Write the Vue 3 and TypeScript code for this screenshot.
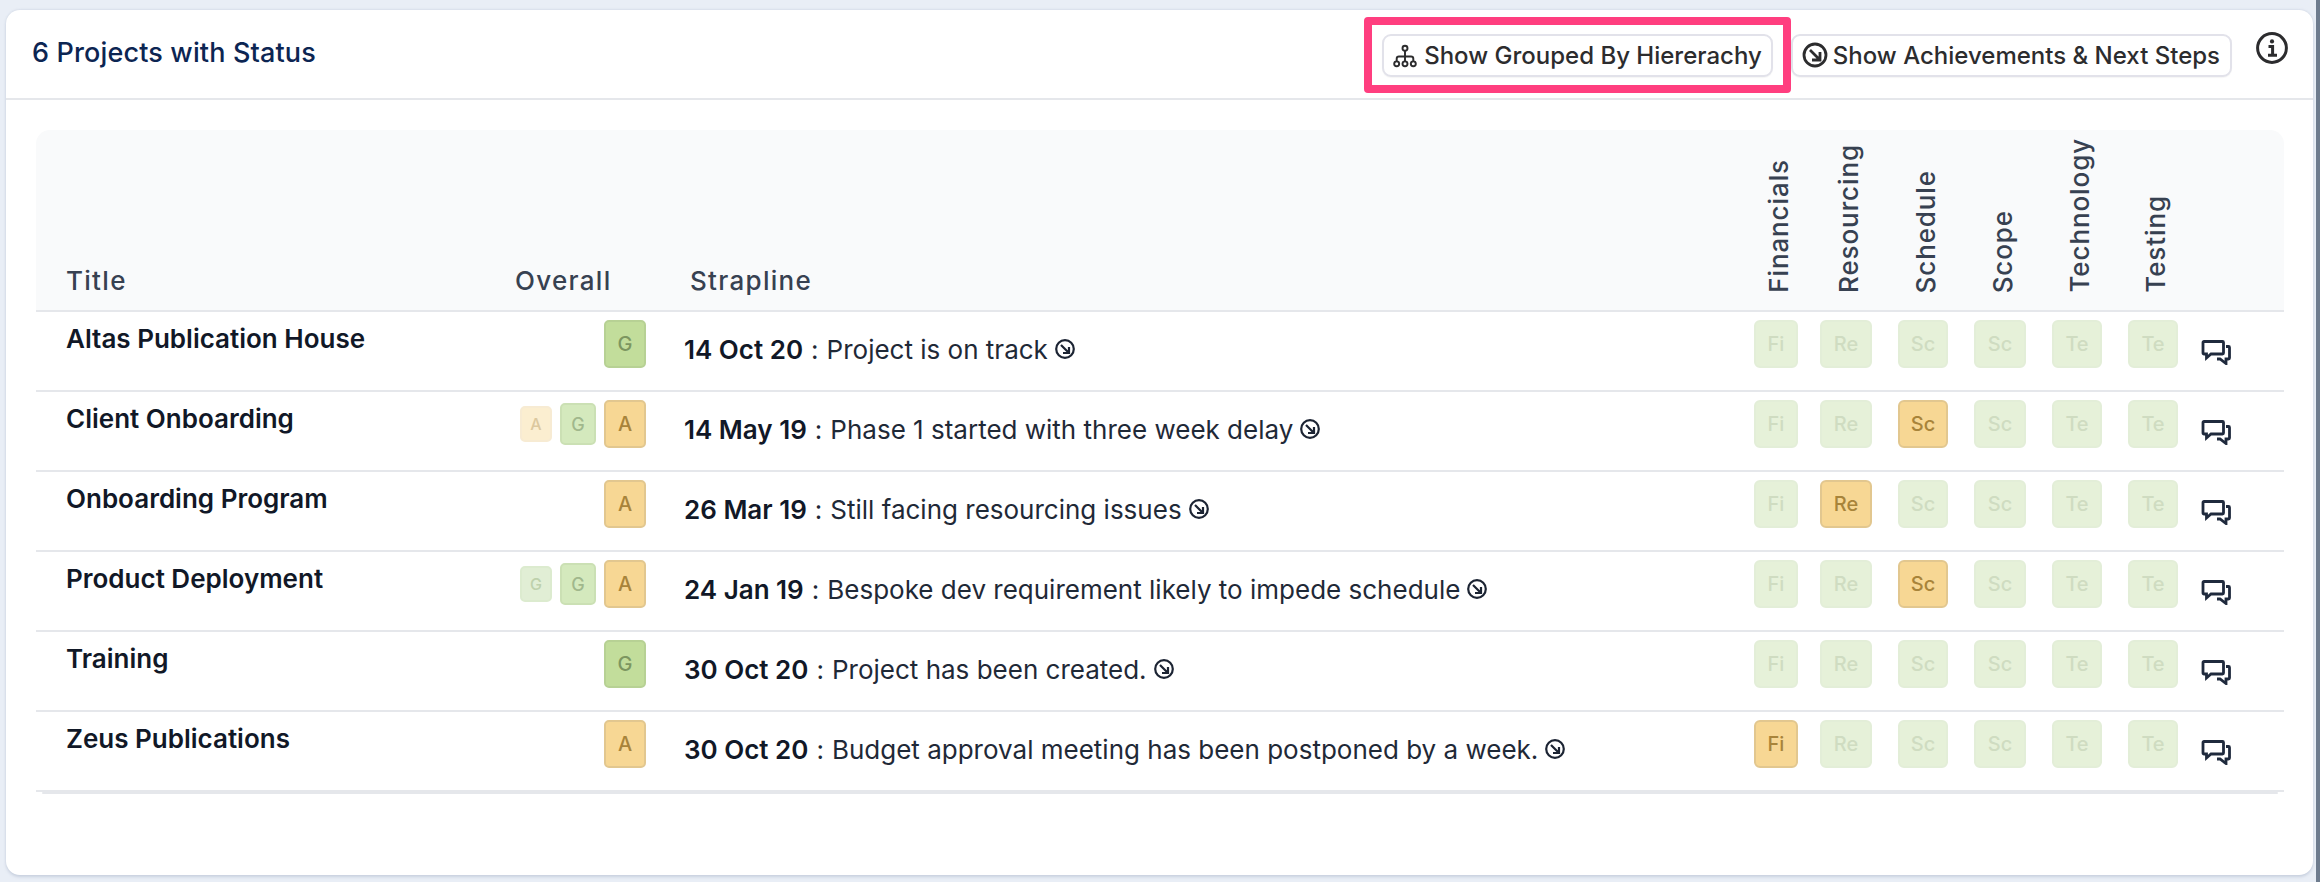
<script setup lang="ts">
type Tone = 'g' | 'a' | 'p'
interface Hist { label: string; tone: 'a' | 'g' }
interface Project {
  title: string
  history: Hist[]
  overall: 'G' | 'A'
  date: string
  text: string
  amber: number
}

const columns = [
  { name: 'Financials', short: 'Fi', width: 44 },
  { name: 'Resourcing', short: 'Re', width: 52 },
  { name: 'Schedule', short: 'Sc', width: 50 },
  { name: 'Scope', short: 'Sc', width: 52 },
  { name: 'Technology', short: 'Te', width: 50 },
  { name: 'Testing', short: 'Te', width: 50 }
]

const projects: Project[] = [
  { title: 'Altas Publication House', history: [], overall: 'G', date: '14 Oct 20', text: 'Project is on track', amber: -1 },
  { title: 'Client Onboarding', history: [{ label: 'A', tone: 'a' }, { label: 'G', tone: 'g' }], overall: 'A', date: '14 May 19', text: 'Phase 1 started with three week delay', amber: 2 },
  { title: 'Onboarding Program', history: [], overall: 'A', date: '26 Mar 19', text: 'Still facing resourcing issues', amber: 1 },
  { title: 'Product Deployment', history: [{ label: 'G', tone: 'g' }, { label: 'G', tone: 'g' }], overall: 'A', date: '24 Jan 19', text: 'Bespoke dev requirement likely to impede schedule', amber: 2 },
  { title: 'Training', history: [], overall: 'G', date: '30 Oct 20', text: 'Project has been created.', amber: -1 },
  { title: 'Zeus Publications', history: [], overall: 'A', date: '30 Oct 20', text: 'Budget approval meeting has been postponed by a week.', amber: 0 }
]

function tone(p: Project, i: number): Tone {
  return p.amber === i ? 'a' : 'p'
}
</script>

<template>
  <div class="page">
    <main class="card">
      <header class="head">
        <h1 class="heading">6 Projects with Status</h1>
        <div class="highlight">
          <button class="btn" type="button">
            <svg class="ic-tree" viewBox="0 0 26 26" width="24" height="24" fill="none" stroke="#2c2c2e" stroke-width="2.1">
              <circle cx="13" cy="4.5" r="2.7" />
              <circle cx="4" cy="21.5" r="2.7" />
              <circle cx="13" cy="21.5" r="2.7" />
              <circle cx="22" cy="21.5" r="2.7" />
              <path d="M13 7.2V18.8M4 18.8V16a2.5 2.5 0 0 1 2.5-2.5h13a2.5 2.5 0 0 1 2.5 2.5v2.8" />
            </svg>
            Show Grouped By Hiererachy
          </button>
        </div>
        <button class="btn second" type="button">
          <svg viewBox="0 0 26 26" width="26" height="26" fill="none" stroke="#2c2c2e" stroke-width="2.8">
            <circle cx="13" cy="13" r="11" />
            <path d="M8 8l9 9M18 10v8h-8" />
          </svg>
          Show Achievements &amp; Next Steps
        </button>
        <svg class="info" viewBox="0 0 32 32" width="32" height="32" fill="none" stroke="#2c2c2e" stroke-width="3">
          <circle cx="16" cy="16" r="14.4" />
          <circle cx="16" cy="9.4" r="2.1" fill="#2c2c2e" stroke="none" />
          <path d="M12.5 14.5H16.6V22.5M12 23.2H21" />
        </svg>
      </header>

      <section class="table">
        <div class="grid thead">
          <div class="th th-title">Title</div>
          <div class="th th-overall">Overall</div>
          <div class="th th-strap">Strapline</div>
          <div v-for="c in columns" :key="c.name" class="th-v-cell">
            <span class="th-v" :style="{ width: c.width + 'px' }"><span class="th-v-text">{{ c.name }}</span></span>
          </div>
          <div></div>
        </div>

        <div v-for="p in projects" :key="p.title" class="grid row">
          <div class="title">{{ p.title }}</div>
          <div class="overall">
            <span
              v-for="(h, i) in p.history"
              :key="i"
              class="rag"
              :class="[i === 0 ? 'small' : 'mid', 'hist-' + h.tone]"
            >{{ h.label }}</span>
            <span class="rag big" :class="p.overall === 'G' ? 'big-g' : 'big-a'">{{ p.overall }}</span>
          </div>
          <div class="strap">
            <strong class="date">{{ p.date }}</strong>
            <span class="sep">:</span>
            <span>{{ p.text }}</span>
            <svg class="go" viewBox="0 0 20 20" width="20" height="20" fill="none" stroke="#1c2433" stroke-width="2.2">
              <circle cx="10" cy="10" r="8.8" />
              <path d="M6 6l7.5 7.5M14 8v6H8" />
            </svg>
          </div>
          <div v-for="(c, i) in columns" :key="c.name" class="cell">
            <span class="chip" :class="tone(p, i) === 'a' ? 'chip-a' : 'chip-p'" :style="{ width: c.width + 'px' }">{{ c.short }}</span>
          </div>
          <div class="cell chat-cell">
            <svg viewBox="0 0 30 26" width="30" height="26" fill="none" stroke="#1f2a3d" stroke-width="2.8" stroke-linejoin="miter">
              <path d="M3 2.5h18.5a1 1 0 0 1 1 1V14a1 1 0 0 1-1 1H10l-4.5 4v-4H3a1 1 0 0 1-1-1V3.5a1 1 0 0 1 1-1z" />
              <path d="M25 7.5h2.5a1 1 0 0 1 1 1V19a1 1 0 0 1-1 1H25v4.5l-6-4.5h-3" />
            </svg>
          </div>
        </div>
        <div class="rule"></div>
      </section>
    </main>
    <div class="strip"></div>
  </div>
</template>

<style>
html,
body {
  margin: 0;
  background: #e9eef6;
}
</style>

<style scoped>
.page {
  box-sizing: border-box;
  width: 2320px;
  height: 882px;
  display: flex;
  padding-left: 6px;
  background: #e9eef6;
  overflow: hidden;
  font-family: Inter, "Liberation Sans", sans-serif;
}
.card {
  flex: 1;
  margin: 10px 3px 7px 0;
  background: #fff;
  border-radius: 14px;
  box-shadow: 0 2px 3px rgba(140, 155, 180, 0.35), 0 -1px 2px rgba(140, 155, 180, 0.15);
}
.strip {
  width: 4px;
  background: #6e7c8e;
}
.head {
  box-sizing: border-box;
  height: 90px;
  display: flex;
  align-items: center;
  padding: 7px 25px 5px 26px;
  border-bottom: 2px solid #e5e7eb;
}
.heading {
  margin: 0 auto 6px 0;
  font-size: 27px;
  font-weight: 500;
  letter-spacing: 0.15px;
  color: #0c2552;
}
.highlight {
  box-sizing: border-box;
  height: 76px;
  padding: 9px 10px 8px;
  border: 8px solid #ff3e7f;
  border-radius: 4px;
  display: flex;
}
.btn {
  box-sizing: border-box;
  height: 43px;
  display: flex;
  align-items: center;
  gap: 7px;
  padding: 0 9px 0 9px;
  background: #fff;
  border: 2px solid #e2e2ea;
  border-radius: 9px;
  box-shadow: 0 1px 1px rgba(0, 0, 0, 0.04);
  font-family: inherit;
  font-size: 24px;
  font-weight: 500;
  color: #2c2c2e;
  white-space: nowrap;
}
.second {
  gap: 5px;
  padding-right: 10px;
}
.info {
  margin: 0 0 14px 24px;
}
.table {
  margin: 30px 29px 0 30px;
}
.grid {
  display: grid;
  grid-template-columns: 474px 136px 1108px 66px 78px 76px 78px 76px 73px 83px;
}
.thead {
  box-sizing: border-box;
  height: 182px;
  background: #f9fafb;
  border-bottom: 2px solid #e5e7eb;
  border-radius: 14px 14px 0 0;
  align-items: end;
}
.th {
  padding-bottom: 13px;
  font-size: 26px;
  line-height: 32px;
  font-weight: 500;
  letter-spacing: 1.3px;
  color: #374151;
}
.th-title {
  padding-left: 30px;
}
.th-overall {
  padding-left: 5px;
}
.th-strap {
  padding-left: 44px;
}
.th-v-cell {
  padding-bottom: 17px;
}
.th-v {
  display: flex;
  justify-content: center;
  margin-left: 3px;
}
.th-v-text {
  writing-mode: vertical-rl;
  transform: rotate(180deg);
  font-size: 26px;
  line-height: 30px;
  font-weight: 500;
  letter-spacing: 0.9px;
  color: #374151;
  white-space: nowrap;
}
.row {
  box-sizing: border-box;
  height: 80px;
  border-bottom: 2px solid #e5e7eb;
}
.row:last-of-type {
  height: 78px;
  border-bottom: 0;
}
.rule {
  height: 2px;
  margin: 0 6px;
  background: #e5e7eb;
  border-radius: 2px;
}
.title {
  padding: 11px 0 0 30px;
  font-size: 26px;
  line-height: 32px;
  font-weight: 600;
  color: #111827;
}
.overall {
  display: flex;
  justify-content: flex-end;
  align-items: center;
  gap: 8px;
  height: 48px;
  padding-top: 8px;
}
.rag {
  box-sizing: border-box;
  display: flex;
  align-items: center;
  justify-content: center;
  border-radius: 5px;
  border: 2px solid transparent;
  font-weight: 500;
}
.big {
  width: 42px;
  height: 48px;
  font-size: 20px;
}
.mid {
  width: 36px;
  height: 42px;
  font-size: 18px;
}
.small {
  width: 32px;
  height: 36px;
  font-size: 16px;
  order: -1;
}
.big-a {
  background: #f7d794;
  border-color: #e2c78f;
  color: #a8843a;
}
.big-g {
  background: #c2dd9b;
  border-color: #b7d194;
  color: #7c9660;
}
.mid.hist-g {
  background: #d4e9bd;
  border-color: #cbe0b4;
  color: #a0b78c;
}
.small.hist-a {
  background: #fbeed0;
  border-color: #f7ebd3;
  color: #dcc89f;
}
.small.hist-g {
  background: #e1eed5;
  border-color: #dcebcf;
  color: #bed1ac;
}
.strap {
  display: flex;
  align-items: center;
  height: 32px;
  padding: 21px 0 0 38px;
  font-size: 26px;
  color: #1f2937;
  white-space: nowrap;
}
.date {
  font-weight: 600;
  color: #111827;
}
.sep {
  margin: 0 8px;
}
.go {
  margin-left: 7px;
}
.cell {
  padding-top: 8px;
}
.chip {
  box-sizing: border-box;
  display: flex;
  align-items: center;
  justify-content: center;
  height: 48px;
  border-radius: 6px;
  border: 2px solid transparent;
  font-size: 20px;
  font-weight: 500;
}
.chip-p {
  background: #e6f1d9;
  border-color: #e3eed8;
  color: #cfdcc1;
}
.chip-a {
  background: #f7d794;
  border-color: #e2c78f;
  color: #a8843a;
}
.chat-cell {
  padding-top: 27px;
}
</style>
